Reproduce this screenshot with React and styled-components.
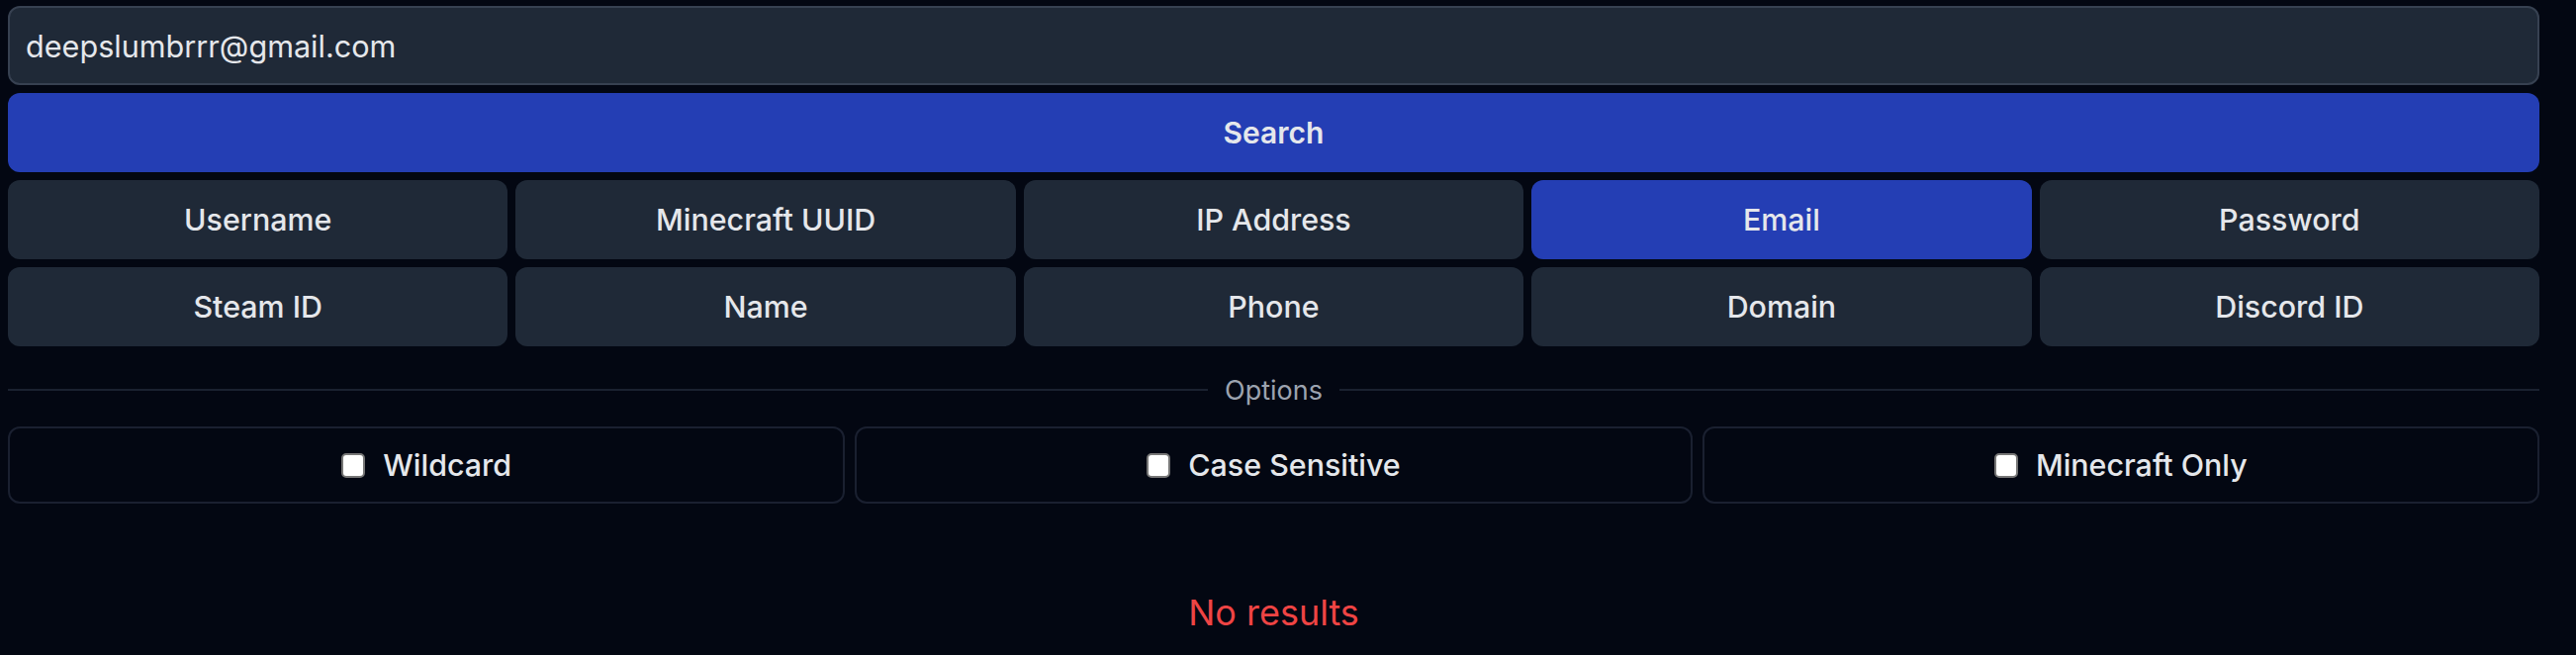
import { useState } from "react";
import styled, { createGlobalStyle } from "styled-components";

// - search types and options -
const searchTypes = [
  "Username",
  "Minecraft UUID",
  "IP Address",
  "Email",
  "Password",
  "Steam ID",
  "Name",
  "Phone",
  "Domain",
  "Discord ID",
];
const searchOptions = ["Wildcard", "Case Sensitive", "Minecraft Only"];

// - styles -
const GlobalStyle = createGlobalStyle`
  html, body {
    margin: 0;
    padding: 0;
    background: #030712;
    font-family: Inter, "Noto Sans", "Liberation Sans", sans-serif;
    color: #e5e7eb;
  }
`;

const Page = styled.div`
  display: flex;
  flex-direction: column;
  gap: 8px;
  padding: 6px 37px 40px 8px;
  min-height: 662px;
  box-sizing: border-box;
`;

const SearchInput = styled.input`
  box-sizing: border-box;
  height: 80px;
  width: 100%;
  padding: 0 16px;
  background: #1f2937;
  border: 2px solid #374151;
  border-radius: 12px;
  color: #e5e7eb;
  font-family: inherit;
  font-size: 30.6px;
  outline: none;
`;

const SearchButton = styled.button`
  height: 80px;
  border: none;
  border-radius: 12px;
  background: #243eb4;
  color: #e5e7eb;
  font-family: inherit;
  font-size: 30px;
  font-weight: 600;
  cursor: pointer;
`;

const TypeGrid = styled.div`
  display: grid;
  grid-template-columns: repeat(5, 1fr);
  gap: 8px;
`;

const TypeButton = styled.button`
  height: 80px;
  border: none;
  border-radius: 12px;
  background: ${(p) => (p.$active ? "#243eb4" : "#1f2937")};
  color: #e5e7eb;
  font-family: inherit;
  font-size: 30.4px;
  font-weight: 500;
  cursor: pointer;
`;

const Divider = styled.div`
  display: flex;
  align-items: center;
  gap: 17px;
  height: 40px;
  margin-top: 16px;
  color: #9ca3af;
  font-size: 27px;

  &::before,
  &::after {
    content: "";
    flex: 1;
    height: 2px;
    background: #1a2130;
  }
`;

const OptionRow = styled.div`
  display: grid;
  grid-template-columns: repeat(3, 1fr);
  gap: 10px;
  margin-top: 9px;
`;

const OptionBox = styled.label`
  box-sizing: border-box;
  height: 78px;
  display: flex;
  align-items: center;
  justify-content: center;
  gap: 18px;
  border: 2px solid #1a2030;
  border-radius: 12px;
  font-size: 30.4px;
  font-weight: 500;
  cursor: pointer;
`;

const Check = styled.input`
  appearance: none;
  margin: 0;
  width: 24px;
  height: 25px;
  background: #ffffff;
  border: 2px solid #767676;
  border-radius: 5px;
  box-sizing: border-box;

  &:checked {
    background: #243eb4;
    border-color: #243eb4;
  }
`;

const Empty = styled.p`
  margin: 75px 0 0;
  text-align: center;
  color: #ef4444;
  font-size: 36px;
  line-height: 54px;
`;

export default function App() {
  const [query, setQuery] = useState("deepslumbrrr@gmail.com");
  const [type, setType] = useState("Email");
  const [opts, setOpts] = useState({});

  const toggle = (name) => setOpts((o) => ({ ...o, [name]: !o[name] }));

  return (
    <>
      <GlobalStyle />
      <Page>
        <SearchInput value={query} onChange={(e) => setQuery(e.target.value)} />
        <SearchButton>Search</SearchButton>
        <TypeGrid>
          {searchTypes.map((t) => (
            <TypeButton key={t} $active={t === type} onClick={() => setType(t)}>
              {t}
            </TypeButton>
          ))}
        </TypeGrid>
        <Divider>Options</Divider>
        <OptionRow>
          {searchOptions.map((o) => (
            <OptionBox key={o}>
              <Check type="checkbox" checked={!!opts[o]} onChange={() => toggle(o)} />
              {o}
            </OptionBox>
          ))}
        </OptionRow>
        <Empty>No results</Empty>
      </Page>
    </>
  );
}
